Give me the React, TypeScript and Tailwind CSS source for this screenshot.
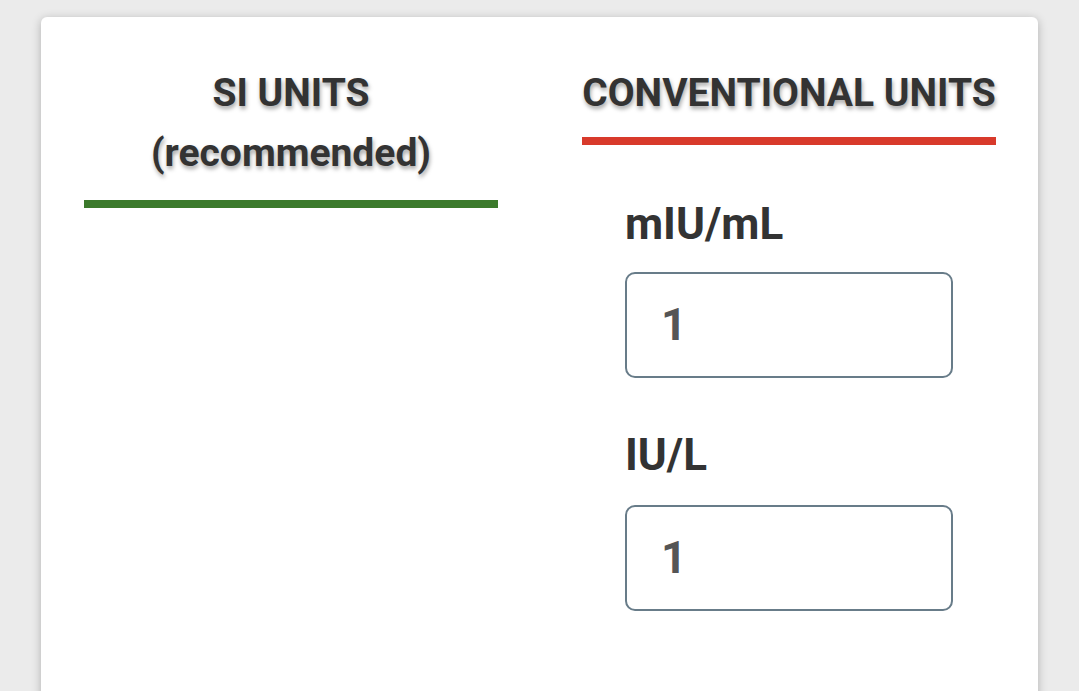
import React from 'react'

const headingStyle =
    "font-['Roboto',sans-serif] font-bold text-[39px] leading-[60px] text-[#333333] text-center [text-shadow:1px_3px_4px_rgba(0,0,0,0.35)]";

const labelStyle = "font-['Roboto',sans-serif] font-bold text-[44px] leading-[52px] text-[#333333]";

function UnitField({ label, value, first }: { label: string; value: string; first?: boolean }) {
    return (
        <div className={first ? 'mt-[53px]' : 'mt-[51px]'}>
            <div className={labelStyle}>{label}</div>
            <div className={(first ? 'mt-[22px]' : 'mt-[24px]') + " w-[328px] h-[106px] border-2 border-[#687c89] rounded-[10px] flex items-center pl-[34px] bg-white"}>
                <span className="font-['Roboto',sans-serif] font-bold text-[45px] text-[#555555]">{value}</span>
            </div>
        </div>
    )
}

export default function App() {
    return (
        <div className="w-[1079px] h-[691px] overflow-hidden bg-[#ebebeb] pt-[17px] pl-[41px]">
            <div className="w-[997px] h-[720px] bg-white rounded-md shadow-[0_2px_10px_rgba(0,0,0,0.25)] pt-[46px] pl-[43px] flex gap-[84px]">
                <div className="w-[414px] flex flex-col">
                    <div className={headingStyle}>
                        SI UNITS
                        <br />
                        (recommended)
                    </div>
                    <div className="mt-[17px] h-[8px] bg-[#3c7a2c]" />
                </div>
                <div className="w-[414px] flex flex-col">
                    <div className={headingStyle}>CONVENTIONAL UNITS</div>
                    <div className="mt-[14px] h-[8px] bg-[#d83a2b]" />
                    <div className="pl-[43px]">
                        <UnitField label="mIU/mL" value="1" first />
                        <UnitField label="IU/L" value="1" />
                    </div>
                </div>
            </div>
        </div>
    )
}
